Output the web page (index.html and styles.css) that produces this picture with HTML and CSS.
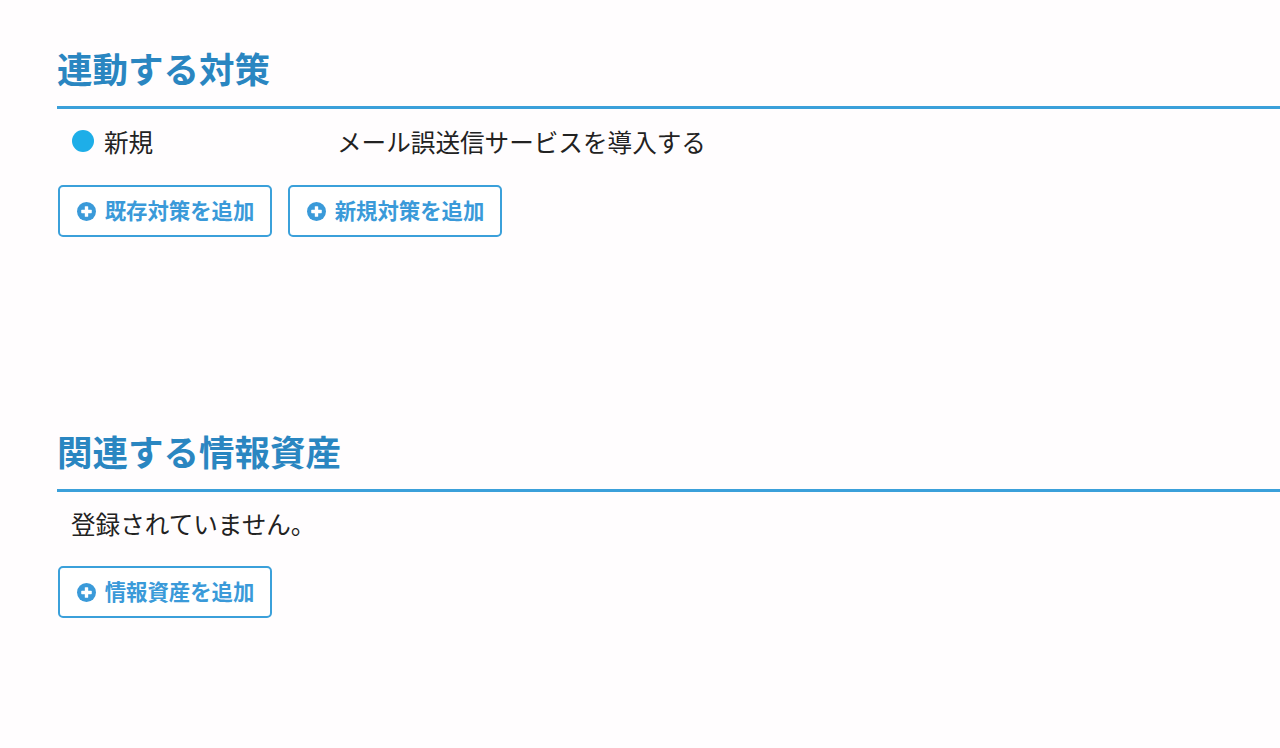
FILE: index.html
```html
<!DOCTYPE html>
<html lang="ja">
<head>
<meta charset="utf-8">
<link rel="stylesheet" href="styles.css">
</head>
<body>
<main class="page">
  <section class="section">
    <h2 class="section-title">連動する対策</h2>
    <div class="row">
      <div class="label"><span class="dot"></span><span>新規</span></div>
      <div class="value">メール誤送信サービスを導入する</div>
    </div>
    <div class="actions">
      <button class="btn"><svg class="plus" viewBox="0 0 18 18"><circle cx="9" cy="9" r="9" fill="#3a9ad9"/><rect x="4" y="7.4" width="10" height="3.2" rx="0.6" fill="#fff"/><rect x="7.4" y="4" width="3.2" height="10" rx="0.6" fill="#fff"/></svg><span class="btn-text">既存対策を追加</span></button>
      <button class="btn"><svg class="plus" viewBox="0 0 18 18"><circle cx="9" cy="9" r="9" fill="#3a9ad9"/><rect x="4" y="7.4" width="10" height="3.2" rx="0.6" fill="#fff"/><rect x="7.4" y="4" width="3.2" height="10" rx="0.6" fill="#fff"/></svg><span class="btn-text">新規対策を追加</span></button>
    </div>
  </section>
  <section class="section second">
    <h2 class="section-title">関連する情報資産</h2>
    <div class="row empty">登録されていません。</div>
    <div class="actions">
      <button class="btn"><svg class="plus" viewBox="0 0 18 18"><circle cx="9" cy="9" r="9" fill="#3a9ad9"/><rect x="4" y="7.4" width="10" height="3.2" rx="0.6" fill="#fff"/><rect x="7.4" y="4" width="3.2" height="10" rx="0.6" fill="#fff"/></svg><span class="btn-text">情報資産を追加</span></button>
    </div>
  </section>
</main>
</body>
</html>
```
FILE: styles.css
```css
html, body {
  margin: 0;
  padding: 0;
  background: #fffdfe;
}
body {
  font-family: "Noto Sans CJK JP", "Noto Sans", sans-serif;
  color: #222;
  overflow: hidden;
}
.page {
  padding: 42px 0 0 57px;
}
.section-title {
  margin: 0;
  font-size: 35.5px;
  line-height: 52px;
  font-weight: 700;
  color: #2a86c1;
  padding-bottom: 12px;
  border-bottom: 3px solid #3ba0da;
}
.row {
  display: flex;
  align-items: center;
  height: 48px;
  margin-top: 8px;
  padding-left: 15px;
  font-size: 24.6px;
}
.row.empty {
  padding-left: 14px;
  margin-top: 7px;
}
.label {
  width: 265px;
  display: flex;
  align-items: center;
  gap: 10px;
}
.dot {
  width: 22px;
  height: 22px;
  border-radius: 50%;
  background: #1eaee8;
}
.actions {
  display: flex;
  gap: 16px;
  margin-top: 20px;
  padding-left: 1px;
}
.second .actions {
  margin-top: 19px;
}
.btn {
  width: 214px;
  height: 52px;
  box-sizing: border-box;
  border: 2px solid #3ba0da;
  border-radius: 5px;
  background: #fff;
  display: flex;
  align-items: center;
  justify-content: center;
  gap: 9px;
  padding: 0 0 0 1px;
  font-family: "Noto Sans CJK JP", "Noto Sans", sans-serif;
  font-size: 21.4px;
  font-weight: 700;
  color: #3a9ad9;
}
.btn-text {
  line-height: 1;
  padding-bottom: 3px;
}
.plus {
  width: 19px;
  height: 19px;
  flex: none;
}
.second {
  margin-top: 188px;
}
```
